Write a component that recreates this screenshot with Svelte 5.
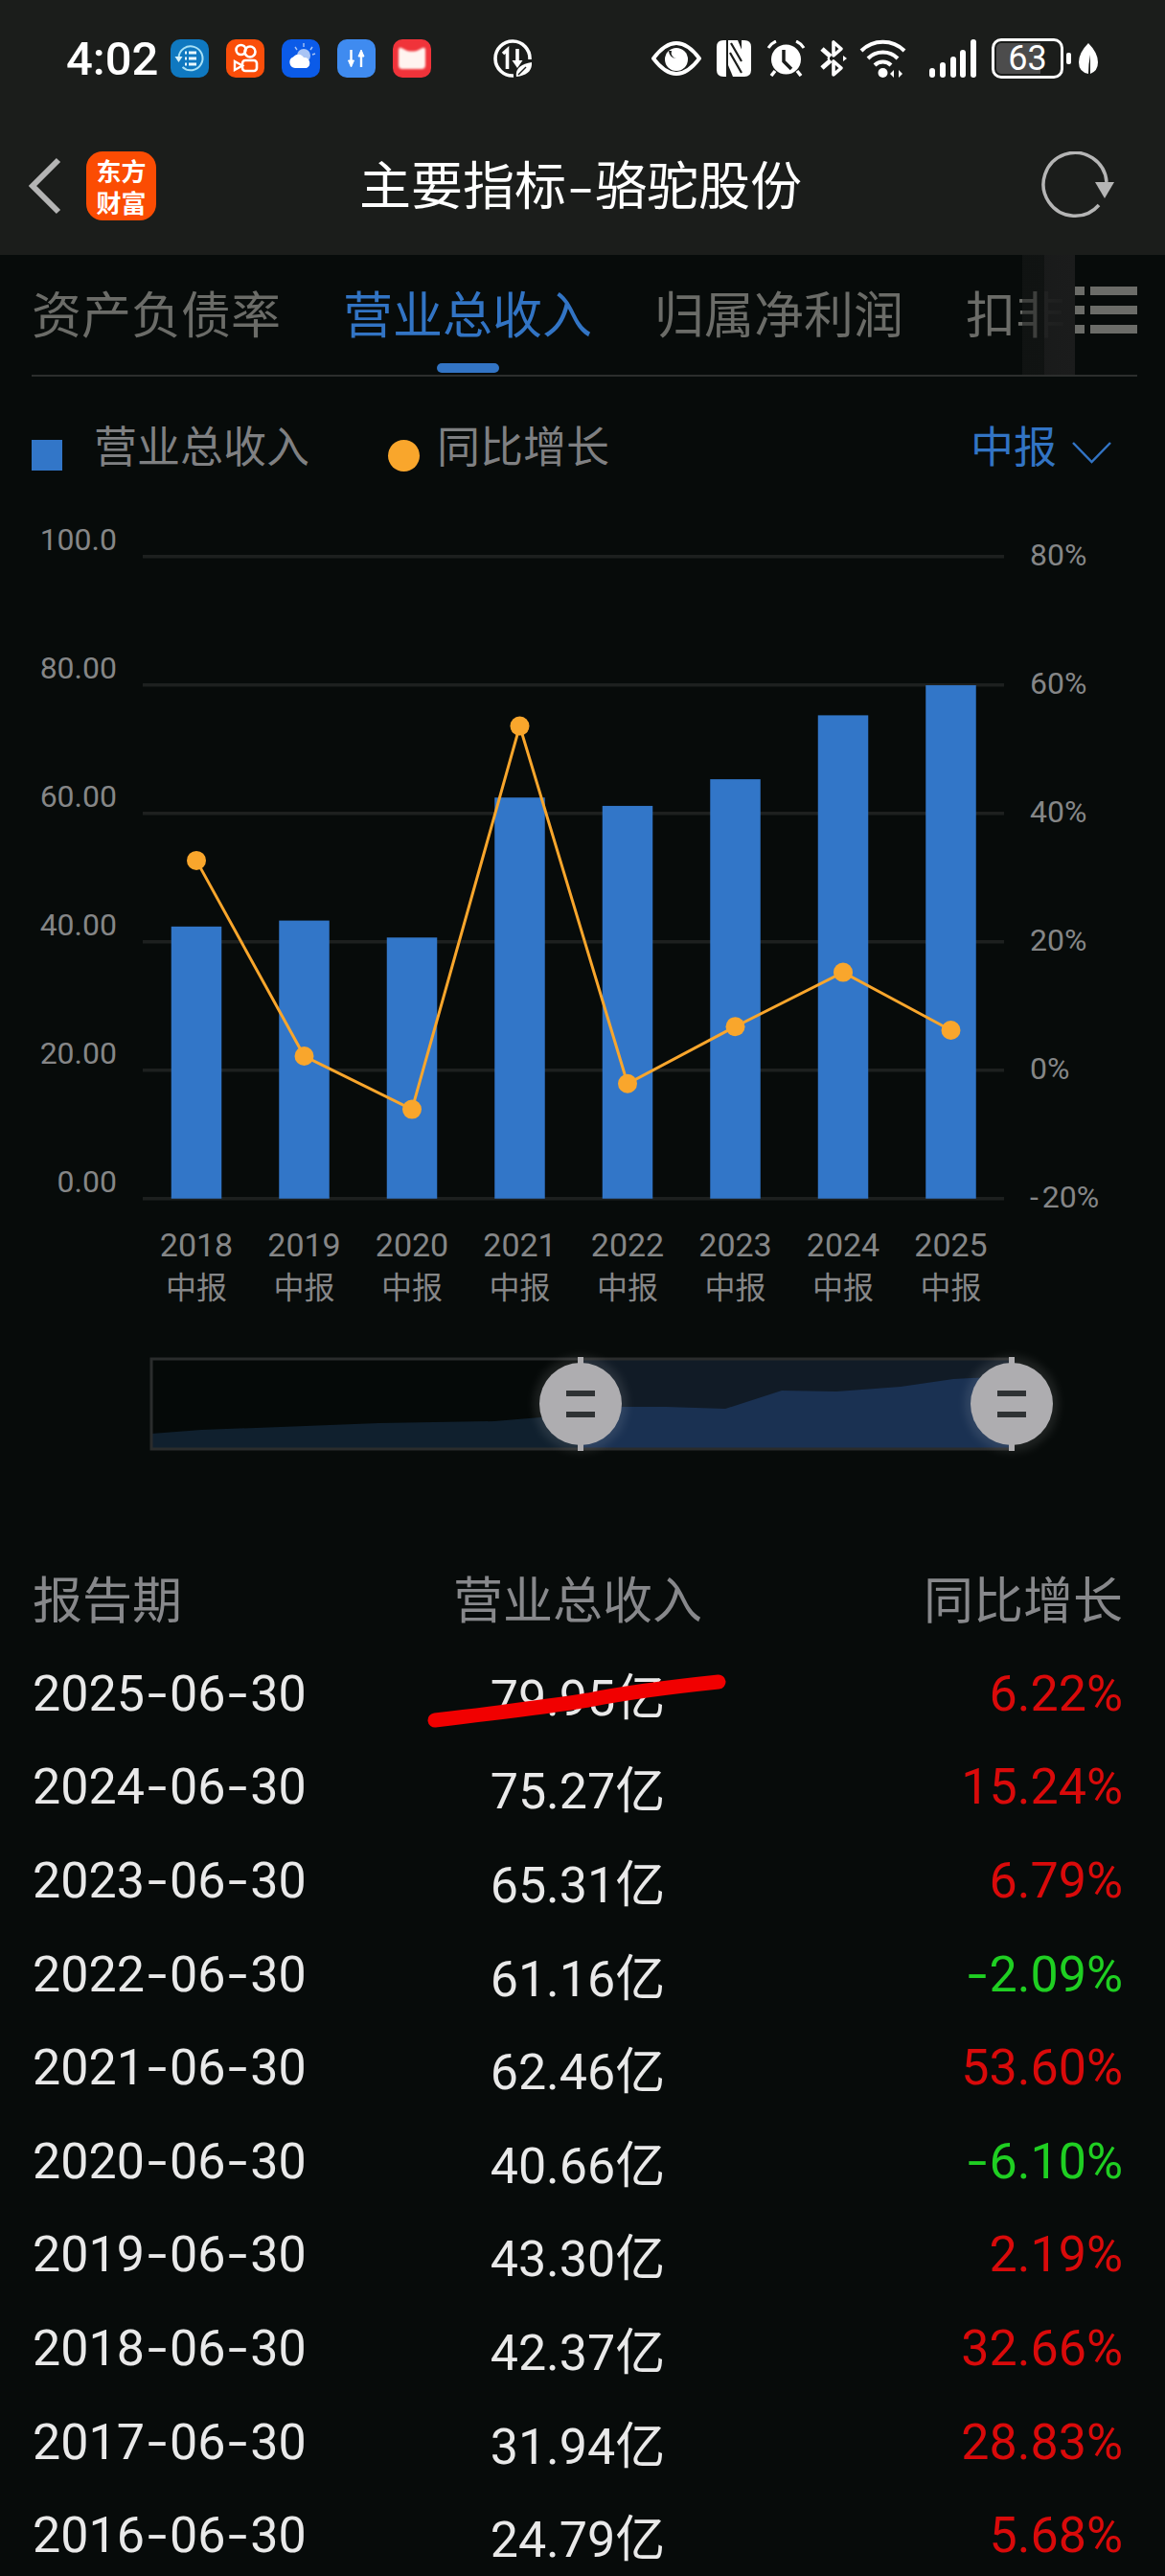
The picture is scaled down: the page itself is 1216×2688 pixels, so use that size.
<script>
  const tabs = ['资产负债率', '营业总收入', '归属净利润', '扣非']

  const series = [
    { year: 2018, revenue: 42.37, growth: 32.66 },
    { year: 2019, revenue: 43.3, growth: 2.19 },
    { year: 2020, revenue: 40.66, growth: -6.1 },
    { year: 2021, revenue: 62.46, growth: 53.6 },
    { year: 2022, revenue: 61.16, growth: -2.09 },
    { year: 2023, revenue: 65.31, growth: 6.79 },
    { year: 2024, revenue: 75.27, growth: 15.24 },
    { year: 2025, revenue: 79.95, growth: 6.22 }
  ]

  const rows = [
    ['2025-06-30', '79.95亿', 6.22],
    ['2024-06-30', '75.27亿', 15.24],
    ['2023-06-30', '65.31亿', 6.79],
    ['2022-06-30', '61.16亿', -2.09],
    ['2021-06-30', '62.46亿', 53.6],
    ['2020-06-30', '40.66亿', -6.1],
    ['2019-06-30', '43.30亿', 2.19],
    ['2018-06-30', '42.37亿', 32.66],
    ['2017-06-30', '31.94亿', 28.83],
    ['2016-06-30', '24.79亿', 5.68]
  ]

  // chart geometry, in page pixels
  const left = 149
  const right = 1048
  const baseY = 1250.7
  const step = 134
  const firstBar = 205
  const barGap = 112.5
  const barWidth = 52.5

  const leftTicks = ['0.00', '20.00', '40.00', '60.00', '80.00', '100.0']
  const rightTicks = ['20%', '0%', '20%', '40%', '60%', '80%']

  const barX = (i) => firstBar + i * barGap
  const revenueY = (v) => baseY - v * (step / 20)
  const growthY = (v) => baseY - (v + 20) * (step / 20)

  const linePoints = series.map((d, i) => `${barX(i)},${growthY(d.growth)}`).join(' ')

  const overview =
    'M157 1512 L158 1496 L210 1492 L293 1489 L395 1485 L516 1483 L564 1479 L650 1468 L695 1468 L757 1470 L816 1451 L873 1452 L940 1447 L995 1439 L1033 1437 L1056 1436 L1056 1512 Z'
  const handles = [606, 1056]

  const pct = (v) => `${Math.abs(v).toFixed(2)}%`
</script>

<div class="page">
  <div class="top">
    <div class="status">
      <span class="time">4:02</span>
      <div class="apps">
        <svg width="40" height="40" viewBox="0 0 40 40">
          <rect width="40" height="40" rx="10" fill="#0f78c0" />
          <path d="M8.500 19a12.500 12.500 0 1 1 4 10" fill="none" stroke="#a6e0f6" stroke-width="2" />
          <path d="M4.500 18h8l-4 6z" fill="#d6f1fb" />
          <path d="M15 14h2M15 20h2M15 26h2M19 14h8M19 20h8M19 26h8" stroke="#e8f8fe" stroke-width="3" />
        </svg>
        <svg width="40" height="40" viewBox="0 0 40 40">
          <rect width="40" height="40" rx="10" fill="#fa4e0a" />
          <circle cx="15.500" cy="11" r="5" fill="none" stroke="#fff" stroke-width="2.600" />
          <circle cx="25" cy="13" r="5.500" fill="none" stroke="#fff" stroke-width="2.600" />
          <rect x="17" y="22" width="15" height="11" rx="3" fill="none" stroke="#fff" stroke-width="2.600" />
          <path d="M17 27.500l-8-4.500v9z" fill="none" stroke="#fff" stroke-width="2.400" />
        </svg>
        <svg width="40" height="40" viewBox="0 0 40 40">
          <rect width="40" height="40" rx="10" fill="#0b5be8" />
          <circle cx="23" cy="17" r="7" fill="#a9c4f4" />
          <path d="M23 4v4M14 8l2 3M32 8l-2 3M35 15l-3 1" stroke="#a9c4f4" stroke-width="1.400" />
          <path d="M14 30a6 6 0 0 1-2-11.500a6.500 6.500 0 0 1 11 0.500a5.800 5.800 0 0 1 3 11z" fill="#fff" />
        </svg>
        <svg width="40" height="40" viewBox="0 0 40 40">
          <rect width="40" height="40" rx="10" fill="#3f8bf0" />
          <path d="M14.500 11v14" stroke="#fff" stroke-width="2.400" />
          <path d="M11.500 22h6l-3 7z" fill="#fff" stroke="#fff" stroke-linejoin="round" />
          <path d="M25 29V15" stroke="#fff" stroke-width="2.400" />
          <path d="M22 18h6l-3-7z" fill="#fff" stroke="#fff" stroke-linejoin="round" />
        </svg>
        <svg width="40" height="40" viewBox="0 0 40 40">
          <rect width="40" height="40" rx="10" fill="#f0333a" />
          <path class="soft" d="M6 11q0-3 3-2l6 3q5 1 10 0l6-3q3-1 3 2v16q0 4-4 4H10q-4 0-4-4z" fill="#fff4f0" />
        </svg>
      </div>
      <svg class="data" width="40" height="40" viewBox="0 0 40 40">
        <path d="M21 38A18 18 0 1 1 38 21" fill="none" stroke="#fff" stroke-width="3.600" />
        <path d="M10 15l4.500-4v20" fill="none" stroke="#fff" stroke-width="3.600" />
        <path d="M25 10v14" stroke="#fff" stroke-width="3.600" />
        <path d="M19.500 22h11L25 30z" fill="#fff" />
        <path d="M24 39q-2-12 16-15q1 13-16 15z" fill="#fff" />
        <path d="M26 37l8-8" stroke="#1b1d1b" stroke-width="1.400" />
      </svg>

      <div class="sys">
        <svg width="52" height="36" viewBox="0 0 52 36">
          <path d="M2 18Q14 2 26 2t24 16Q38 34 26 34T2 18z" fill="none" stroke="#fff" stroke-width="3.800" />
          <circle cx="26" cy="19" r="12" fill="#fff" />
          <path d="M18 10a8 8 0 0 0 8 8 6 6 0 0 1-5-8z" fill="#1b1d1b" />
        </svg>
        <svg width="36" height="38" viewBox="0 0 36 38">
          <path d="M7 0h3v38H7q-7 0-7-7V7q0-7 7-7z" fill="#fff" />
          <path d="M29 38h-3V0h3q7 0 7 7v24q0 7-7 7z" fill="#fff" />
          <path d="M12 0h10l5 12v26H17L12 26z" fill="#fff" />
          <path d="M14 13l12 21M15 3l11 19" stroke="#1b1d1b" stroke-width="2.200" fill="none" />
        </svg>
        <svg width="41" height="38" viewBox="0 0 41 38">
          <circle cx="20.500" cy="20" r="15.500" fill="#fff" />
          <path d="M18 10v12l8 8" fill="none" stroke="#1b1d1b" stroke-width="3.500" />
          <path d="M2 8q3-5 8-7M39 8q-3-5-8-7" fill="none" stroke="#fff" stroke-width="3" />
          <path d="M9 32l-4 5M32 32l4 5" stroke="#fff" stroke-width="3.500" />
        </svg>
        <svg class="m-1" width="28" height="40" viewBox="0 0 28 40">
          <path d="M2 10l9 8M2 30l9-8" stroke="#fff" stroke-width="5" />
          <path d="M14 3v14l8-7zM14 23v14l8-7z" fill="none" stroke="#fff" stroke-width="3.600" stroke-linejoin="round" />
          <path d="M24 17l4 3-4 3zM7 20l3-2v4z" fill="#fff" />
        </svg>
        <svg class="m-3" width="49" height="40" viewBox="0 0 49 40">
          <path d="M2 12a32 32 0 0 1 45 0M9 20a22 22 0 0 1 31 0M16 27a12 12 0 0 1 17 0" fill="none" stroke="#fff" stroke-width="4" />
          <circle cx="24.500" cy="35" r="5" fill="#fff" />
          <path d="M36 32l-4 4 4 4zM41 32l4 4-4 4z" fill="#fff" />
        </svg>
        <svg class="m8" width="49" height="40" viewBox="0 0 49 40">
          <g fill="#fff">
            <rect x="0" y="30" width="6" height="10" rx="3" />
            <rect x="11" y="24" width="6" height="16" rx="3" />
            <rect x="22" y="18" width="6" height="22" rx="3" />
            <rect x="32" y="11" width="6" height="29" rx="3" />
            <rect x="43" y="0" width="6" height="40" rx="3" />
          </g>
        </svg>
        <div class="battery"><span class="level"></span><span class="num">63</span></div>
        <span class="nub"></span>
        <svg class="leaf" width="20" height="33" viewBox="0 0 20 33">
          <path d="M10 0Q20 10 20 20q0 9-8 12 0-12 0-20-2 10-2 20Q0 30 0 20 0 10 10 0z" fill="#fff" />
        </svg>
      </div>
    </div>

    <div class="bar">
      <svg class="back" width="40" height="64" viewBox="0 0 40 64">
        <path d="M33 5L6 32l27 27" fill="none" stroke="#b4b4b4" stroke-width="6" />
      </svg>
      <div class="logo">东方<br />财富</div>
      <h1>主要指标<span class="title-dash">-</span>骆驼股份</h1>
      <svg class="refresh" width="80" height="72" viewBox="0 0 80 72">
        <path d="M71 32A33 33 0 1 0 63 56" fill="none" stroke="#b5b5b5" stroke-width="3.500" />
        <path d="M59 32h20l-10 17z" fill="#b5b5b5" />
      </svg>
    </div>
  </div>

  <nav class="tabs">
    <div class="scroller">
      {#each tabs as tab, i}
        <span class="tab" class:active={i === 1}>{tab}</span>
      {/each}
      <span class="fade"></span>
    </div>
    <div class="menu">
      <span></span><span></span><span></span>
    </div>
  </nav>

  <div class="legend">
    <i class="swatch"></i>
    <span class="legend-a">营业总收入</span>
    <i class="dot"></i>
    <span class="legend-b">同比增长</span>
    <span class="period">中报</span>
    <svg class="chev" width="41" height="24" viewBox="0 0 41 24">
      <path d="M1 2l19.500 20L40 2" fill="none" stroke="#3274c4" stroke-width="2.500" />
    </svg>
  </div>

  <svg class="chart" width="1216" height="860" viewBox="0 520 1216 860">
    {#each leftTicks as tick, i}
      <line x1={left} x2={right} y1={baseY - i * step} y2={baseY - i * step} class="grid" />
      <text x="122" y={baseY - i * step - 7} text-anchor="end" class="axis">{tick}</text>
      <text x="1075" y={baseY - i * step + 9} class="axis">
        {#if i === 0}-<tspan dx="4">{rightTicks[i]}</tspan>{:else}{rightTicks[i]}{/if}
      </text>
    {/each}

    {#each series as d, i}
      <rect
        x={barX(i) - barWidth / 2}
        y={revenueY(d.revenue)}
        width={barWidth}
        height={baseY - revenueY(d.revenue)}
        fill="#3276c8"
      />
      <text x={barX(i)} y="1311" text-anchor="middle" class="cat">{d.year}</text>
      <text x={barX(i)} y="1355" text-anchor="middle" class="cat cjk">中报</text>
    {/each}

    <polyline points={linePoints} fill="none" stroke="#f9a62c" stroke-width="3" />
    {#each series as d, i}
      <circle cx={barX(i)} cy={growthY(d.growth)} r="10" fill="#f9a62c" />
    {/each}
  </svg>

  <svg class="overview" width="1216" height="140" viewBox="0 1400 1216 140">
    <defs>
      <clipPath id="area"><path d={overview} /></clipPath>
      <filter id="glow"><feGaussianBlur stdDeviation="4" /></filter>
    </defs>
    <rect x="157" y="1419" width="899" height="93" fill="#050908" />
    <rect x="606" y="1419" width="450" height="93" fill="#111b26" />
    <g clip-path="url(#area)">
      <rect x="157" y="1419" width="449" height="93" fill="#10202e" />
      <rect x="606" y="1419" width="450" height="93" fill="#1a3152" />
    </g>
    <path d="M1056 1418H158V1512H1056" fill="none" stroke="#2a2c2c" stroke-width="3" />
    {#each handles as x}
      <ellipse cx={x} cy="1465" rx="49" ry="50" fill="#ffffff" opacity="0.09" filter="url(#glow)" />
      <rect x={x - 3} y="1416" width="6" height="98" fill="#aeadb0" />
      <circle cx={x} cy="1465" r="43" fill="#aeadb0" />
      <rect x={x - 15} y="1451" width="30" height="6" fill="#2f3234" />
      <rect x={x - 15} y="1473" width="30" height="6" fill="#2f3234" />
    {/each}
  </svg>

  <section class="table">
    <div class="row head">
      <span>报告期</span>
      <span>营业总收入</span>
      <span>同比增长</span>
    </div>
    {#each rows as [date, value, change]}
      {@const [y, m, d] = date.split('-')}
      <div class="row">
        <span>{y}<span class="dash">-</span>{m}<span class="dash">-</span>{d}</span>
        <span>{value}</span>
        <span class={change < 0 ? 'down' : 'up'}>{#if change < 0}<span class="dash">-</span>{/if}{pct(change)}</span>
      </div>
    {/each}
    <svg class="scribble" width="320" height="60" viewBox="0 0 320 60">
      <path d="M10 49Q120 36 170 28Q220 18 306 9" fill="none" stroke="#f10000" stroke-width="15" stroke-linecap="round" />
    </svg>
  </section>
</div>

<style>
  :global(body) {
    margin: 0;
    background: #070b0a;
  }

  .page {
    position: relative;
    width: 1216px;
    height: 2688px;
    overflow: hidden;
    background: #070b0a;
    font-family: Roboto, 'Noto Sans CJK SC', sans-serif;
  }

  .top {
    height: 266px;
    background: #1b1d1b;
  }

  .status {
    display: flex;
    align-items: center;
    height: 122px;
    padding: 0 70px 0 69px;
    box-sizing: border-box;
  }

  .time {
    width: 94px;
    color: #fff;
    font-size: 49px;
    font-weight: 500;
    line-height: 1;
    white-space: nowrap;
  }

  .apps {
    display: flex;
    gap: 18px;
    margin-left: 15px;
  }

  .soft {
    filter: blur(1px);
  }

  .data {
    margin-left: 65px;
  }

  .sys {
    display: flex;
    align-items: center;
    gap: 16px;
    margin-left: auto;
  }

  .m-1 {
    margin-left: -1px;
  }

  .m-3 {
    margin-left: -3px;
  }

  .m8 {
    margin-left: 8px;
  }

  .battery {
    position: relative;
    width: 75px;
    height: 42px;
    box-sizing: border-box;
    border: 3px solid #fff;
    border-radius: 10px;
    overflow: hidden;
    color: #fff;
    display: flex;
    align-items: center;
    justify-content: center;
  }

  .level {
    position: absolute;
    inset: 2px 21px 2px 2px;
    background: #4c4c4c;
    border-radius: 5px 0 0 5px;
  }

  .num {
    position: relative;
    font-size: 36px;
    line-height: 1;
  }

  .nub {
    width: 5px;
    height: 12px;
    margin-left: -13px;
    background: #fff;
    border-radius: 2px;
  }

  .leaf {
    margin-left: -8px;
  }

  .bar {
    position: relative;
    display: flex;
    align-items: center;
    height: 144px;
    padding-left: 28px;
  }

  .logo {
    width: 73px;
    height: 72px;
    margin-left: 22px;
    padding-top: 3px;
    box-sizing: border-box;
    background: #fb4c03;
    border-radius: 17px;
    color: #fff;
    font-family: 'Noto Sans CJK SC', sans-serif;
    font-size: 26px;
    font-weight: 700;
    line-height: 33px;
    text-align: center;
  }

  h1 {
    margin: 0 0 6px 212px;
    color: #fff;
    font-family: 'Noto Sans CJK SC', sans-serif;
    font-size: 54px;
    font-weight: 400;
    line-height: 1;
    white-space: nowrap;
  }

  .title-dash {
    display: inline-block;
    width: 30px;
    text-align: center;
    transform: scaleX(1.5);
  }

  .refresh {
    margin-left: auto;
    margin-right: 52px;
  }

  .tabs {
    display: flex;
    height: 127px;
    margin: 0 29px 0 33px;
    box-sizing: border-box;
    border-bottom: 2px solid #2c2e2d;
  }

  .scroller {
    position: relative;
    display: flex;
    align-items: center;
    gap: 65px;
    flex: 1;
    min-width: 0;
    padding-bottom: 6px;
    box-sizing: border-box;
    overflow: hidden;
    white-space: nowrap;
  }

  .tab {
    position: relative;
    flex: none;
    color: #6b6c68;
    font-family: 'Noto Sans CJK SC', sans-serif;
    font-size: 52px;
    line-height: 60px;
  }

  .active {
    color: #3274c4;
  }

  .active::after {
    content: '';
    position: absolute;
    left: 98px;
    bottom: -33px;
    width: 65px;
    height: 10px;
    border-radius: 5px;
    background: #3274c4;
  }

  .fade {
    position: absolute;
    top: 0;
    bottom: 0;
    right: 0;
    width: 55px;
    background: linear-gradient(
      90deg,
      rgba(24, 26, 25, 0.55) 0,
      rgba(24, 26, 25, 0.55) 23px,
      rgba(27, 28, 28, 0.92) 23px,
      rgba(27, 28, 28, 1) 100%
    );
  }

  .menu {
    display: grid;
    gap: 11px;
    align-content: start;
    width: 65px;
    padding-top: 33px;
  }

  .menu span {
    height: 9px;
    background: linear-gradient(90deg, #6b6c68 10px, transparent 10px, transparent 16px, #6b6c68 16px);
  }

  .legend {
    display: flex;
    align-items: flex-start;
    height: 127px;
    padding: 46px 56px 0 33px;
    box-sizing: border-box;
    color: #7f8082;
    font-family: 'Noto Sans CJK SC', sans-serif;
    font-size: 45px;
    line-height: 50px;
  }

  .swatch {
    width: 32px;
    height: 32px;
    margin: 20px 33px 0 0;
    background: #3276c8;
  }

  .dot {
    width: 33px;
    height: 33px;
    margin: 20px 18px 0 82px;
    border-radius: 50%;
    background: #f9a62c;
  }

  .period {
    margin-left: auto;
    color: #3274c4;
  }

  .chev {
    margin: 21px 0 0 16px;
  }

  .chart,
  .overview {
    display: block;
  }

  .overview {
    margin-top: 20px;
  }

  .grid {
    stroke: #1d201f;
    stroke-width: 3.5;
  }

  .axis {
    fill: #858687;
    font-size: 32px;
    font-family: Roboto, sans-serif;
  }

  .cat {
    fill: #858687;
    font-size: 34px;
    font-family: Roboto, sans-serif;
  }

  .cjk {
    font-family: 'Noto Sans CJK SC', sans-serif;
    font-size: 32px;
  }

  .table {
    position: relative;
    margin-top: 81px;
    padding: 0 44px 0 34px;
  }

  .row {
    display: grid;
    grid-template-columns: 1fr 1fr 1fr;
    align-items: center;
    height: 97.6px;
    color: #e9e9e9;
    font-size: 52px;
    white-space: nowrap;
  }

  .row > span:nth-child(2) {
    text-align: center;
  }

  .row > span:nth-child(3) {
    text-align: right;
  }

  .dash {
    display: inline-block;
    width: 26px;
    text-align: center;
    transform: scaleX(1.4);
  }

  .head {
    height: 97.6px;
    padding-bottom: 6px;
    box-sizing: border-box;
    color: #87888b;
    font-family: 'Noto Sans CJK SC', sans-serif;
    font-size: 52px;
  }

  .up {
    color: #d90a0a;
  }

  .down {
    color: #1fcf22;
  }

  .scribble {
    position: absolute;
    left: 444px;
    top: 125px;
  }
</style>
